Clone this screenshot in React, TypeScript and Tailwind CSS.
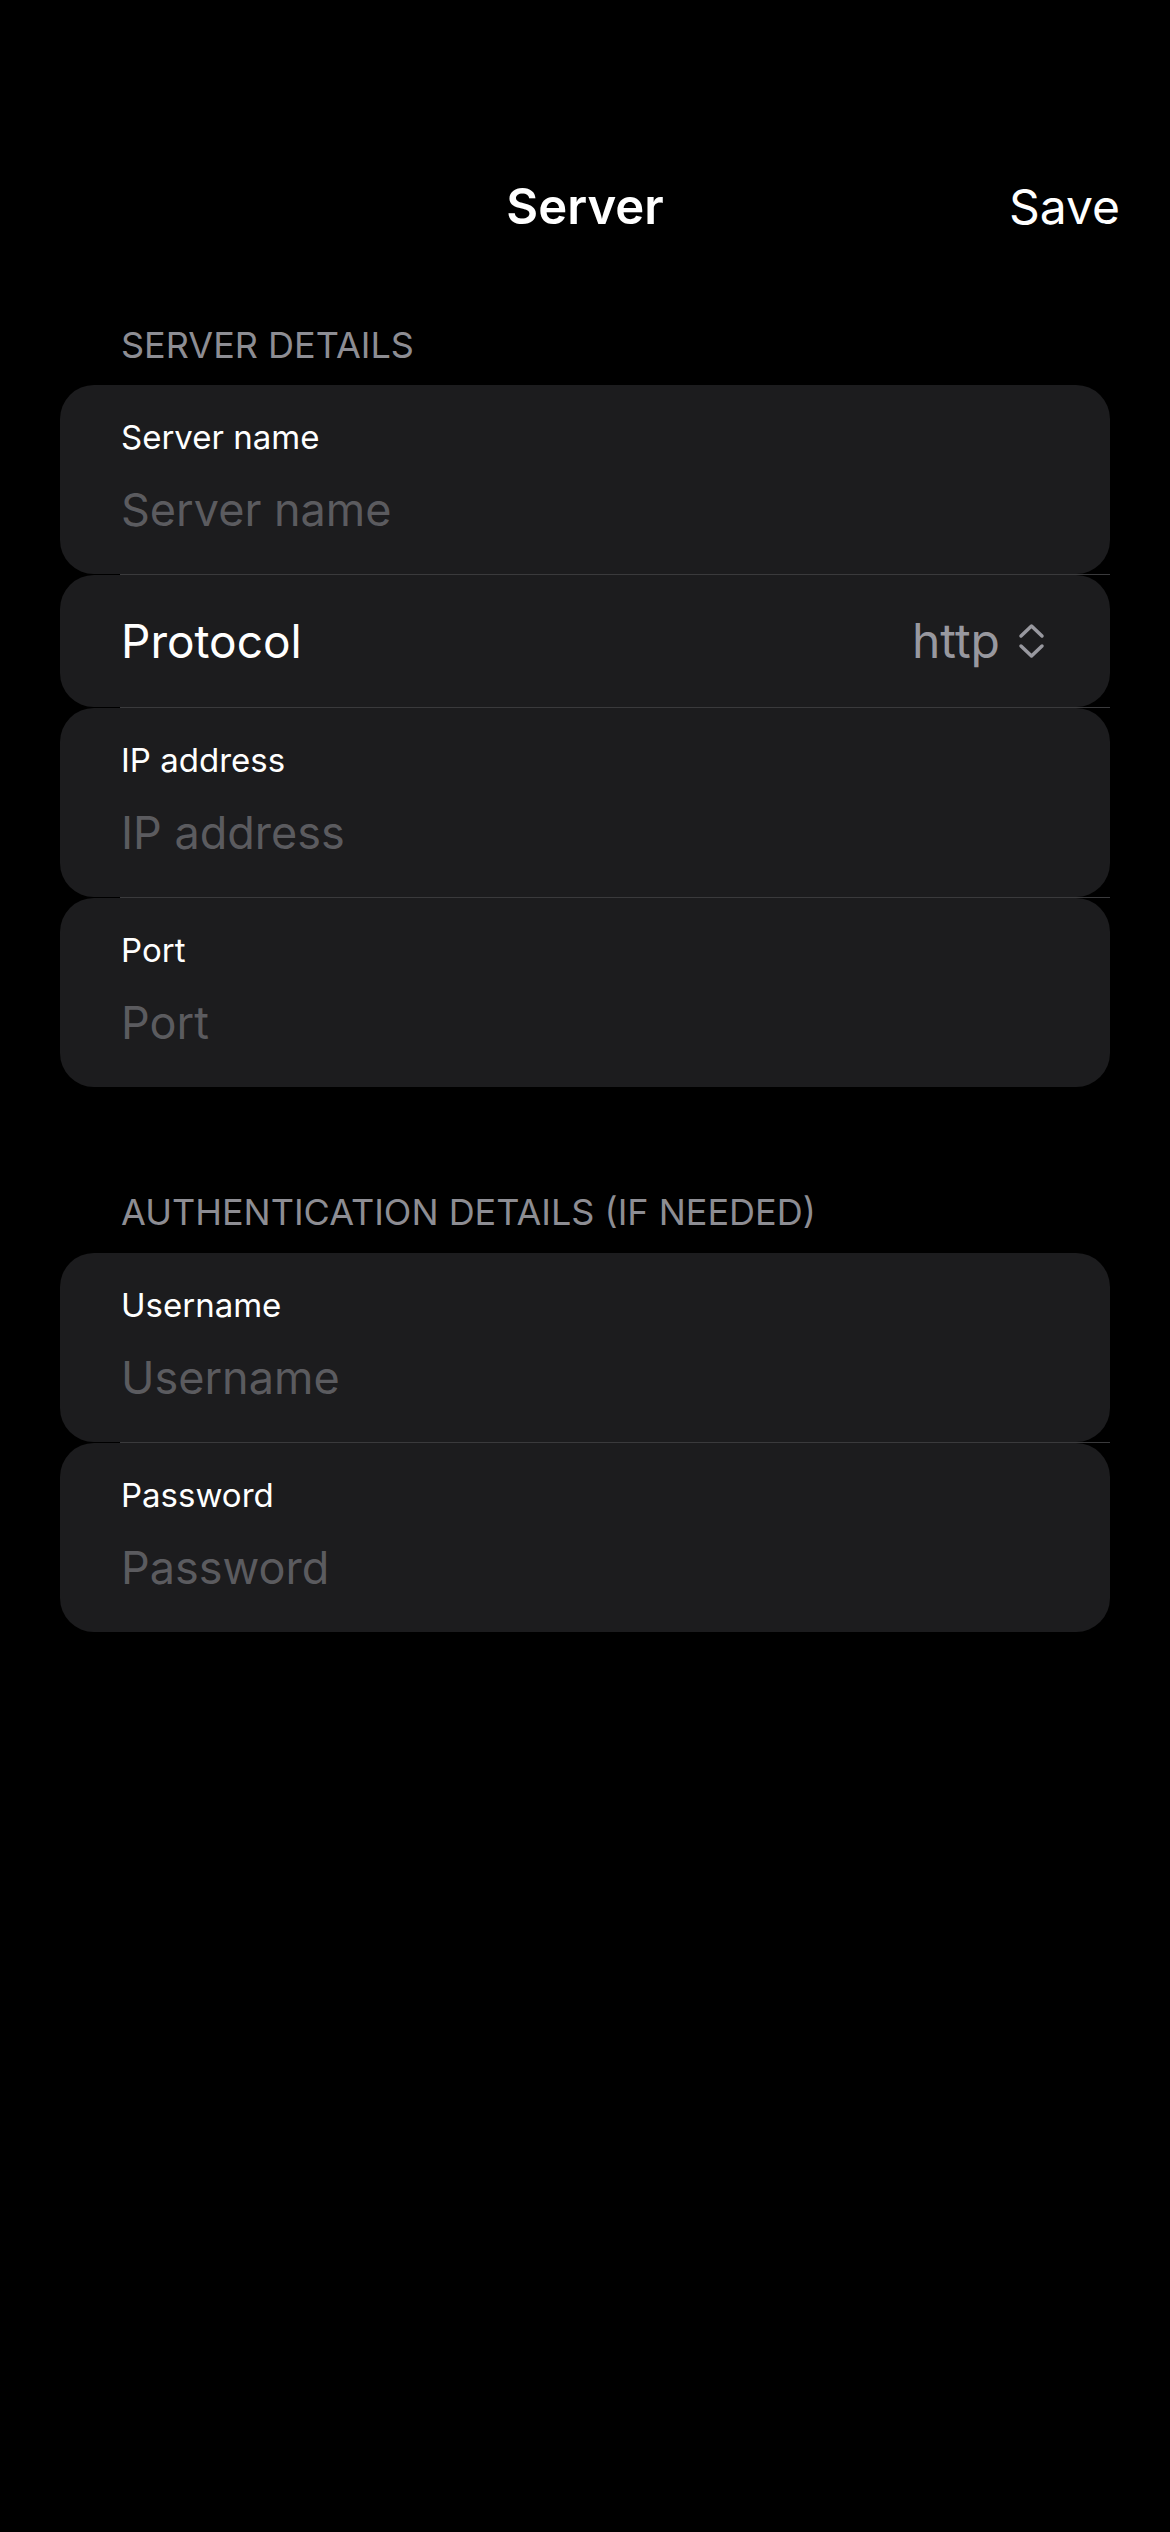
import React from 'react';

const FieldRow = ({ label }: { label: string }) => (
  <div className="h-[189px] rounded-[34px] bg-[#1c1c1e] px-[61px] pt-[32px]">
    <div className="text-[33px] leading-[40px] text-white">{label}</div>
    <input
      type="text"
      placeholder={label}
      className="mt-[25px] w-full bg-transparent text-[45px] leading-[56px] text-white placeholder:text-[#5b5b5f] outline-none"
    />
  </div>
);

const Separator = () => (
  <div className="ml-[60px] h-px bg-[#3a3a3c]" />
);

const SectionHeader = ({ children }: { children: React.ReactNode }) => (
  <div className="px-[61px] text-[36px] leading-[40px] text-[#8d8d93] uppercase">{children}</div>
);

const App = () => {
  return (
    <div className="min-h-[2532px] bg-black font-['Inter',sans-serif]">
      {/* Nav bar */}
      <div className="pt-[157px]">
        <div className="relative flex h-[100px] items-center justify-center">
          <h1 className="text-[49px] font-semibold text-white">Server</h1>
          <button className="absolute right-[50px] text-[48px] text-white">Save</button>
        </div>
      </div>

      <div className="mx-[60px] mt-[68px]">
        <SectionHeader>Server details</SectionHeader>
        <div className="mt-[20px]">
          <FieldRow label="Server name" />
          <Separator />
          <div className="flex h-[132px] items-center justify-between rounded-[34px] bg-[#1c1c1e] pl-[61px] pr-[65px]">
            <span className="text-[46px] text-white">Protocol</span>
            <div className="flex items-center gap-[18px]">
              <span className="text-[48px] text-[#98989f]">http</span>
              <svg width="27" height="36" viewBox="0 0 27 36" fill="none" stroke="#98989f" strokeWidth="3.5" strokeLinecap="round" strokeLinejoin="round">
                <path d="M3 13 L13.5 3 L24 13" />
                <path d="M3 23 L13.5 33 L24 23" />
              </svg>
            </div>
          </div>
          <Separator />
          <FieldRow label="IP address" />
          <Separator />
          <FieldRow label="Port" />
        </div>

        <div className="mt-[105px]">
          <SectionHeader>Authentication details (if needed)</SectionHeader>
        </div>
        <div className="mt-[21px]">
          <FieldRow label="Username" />
          <Separator />
          <FieldRow label="Password" />
        </div>
      </div>
    </div>
  );
};

export default App;
